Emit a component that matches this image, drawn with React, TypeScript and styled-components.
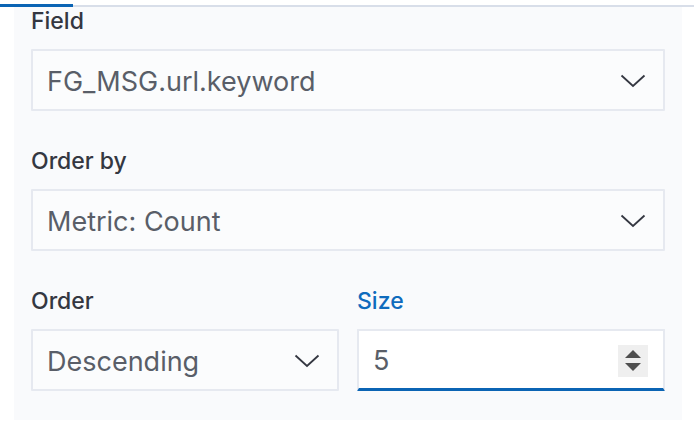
import React from "react";
import styled, { createGlobalStyle } from "styled-components";

const GlobalStyle = createGlobalStyle`
  html, body {
    margin: 0;
    padding: 0;
    background: #ffffff;
  }
  body {
    font-family: Inter, "Noto Sans", sans-serif;
    -webkit-font-smoothing: antialiased;
  }
`;

const Page = styled.div`
  width: 694px;
  height: 422px;
  display: flex;
  flex-direction: column;
`;

const TabStrip = styled.div`
  display: flex;
  align-items: flex-end;
  height: 3px;
  margin-top: 4px;
`;

const ActiveTab = styled.div`
  width: 73px;
  height: 3px;
  background: #0b64b4;
`;

const TabRule = styled.div`
  flex: 1;
  height: 2px;
  background: #d8dee9;
`;

const Panel = styled.div`
  flex: 1;
  margin: 0 12px 2px 14px;
  padding: 0 17px;
  background: #f9fafc;
  display: flex;
  flex-direction: column;
  gap: 36px;
`;

const Row = styled.div`
  display: grid;
  grid-template-columns: 1fr 1fr;
  gap: 18px;
`;

const FormRow = styled.div`
  display: flex;
  flex-direction: column;
`;

const Label = styled.label<{ $focused?: boolean }>`
  display: block;
  height: 28px;
  line-height: 28px;
  margin-bottom: 14px;
  font-size: 23px;
  font-weight: 500;
  color: ${({ $focused }) => ($focused ? "#0f6bbd" : "#343741")};
`;

const Control = styled.div<{ $focused?: boolean }>`
  box-sizing: border-box;
  height: 62px;
  display: flex;
  align-items: center;
  justify-content: space-between;
  padding: 2px 17px 0 14px;
  background: ${({ $focused }) => ($focused ? "#ffffff" : "#fbfcfd")};
  border: 2px solid #e6e9f0;
  border-bottom: ${({ $focused }) =>
    $focused ? "3px solid #0b64b4" : "2px solid #e6e9f0"};
  border-radius: 1px;
  font-size: 27px;
  color: #595e68;
`;

const Value = styled.span`
  white-space: nowrap;
`;

const Stepper = styled.div`
  width: 30px;
  height: 32px;
  margin-right: -2px;
  background: #efefef;
  display: flex;
  align-items: center;
  justify-content: center;
`;

const Chevron = () => (
  <svg width="26" height="14" viewBox="0 0 26 14" aria-hidden="true">
    <path
      d="M1.5 1.5 L13 12 L24.5 1.5"
      fill="none"
      stroke="#343741"
      strokeWidth="1.8"
    />
  </svg>
);

const Arrows = () => (
  <svg width="16" height="22" viewBox="0 0 16 22" aria-hidden="true">
    <path d="M8 0 L16 8 L0 8 Z" fill="#4f4f4f" />
    <path d="M0 13 L16 13 L8 21 Z" fill="#4f4f4f" />
  </svg>
);

const SelectBox: React.FC<{ value: string }> = ({ value }) => (
  <Control>
    <Value>{value}</Value>
    <Chevron />
  </Control>
);

export default function App() {
  return (
    <Page>
      <GlobalStyle />
      <TabStrip>
        <ActiveTab />
        <TabRule />
      </TabStrip>
      <Panel>
        <FormRow>
          <Label>Field</Label>
          <SelectBox value="FG_MSG.url.keyword" />
        </FormRow>
        <FormRow>
          <Label>Order by</Label>
          <SelectBox value="Metric: Count" />
        </FormRow>
        <Row>
          <FormRow>
            <Label>Order</Label>
            <SelectBox value="Descending" />
          </FormRow>
          <FormRow>
            <Label $focused>Size</Label>
            <Control $focused>
              <Value>5</Value>
              <Stepper>
                <Arrows />
              </Stepper>
            </Control>
          </FormRow>
        </Row>
      </Panel>
    </Page>
  );
}
